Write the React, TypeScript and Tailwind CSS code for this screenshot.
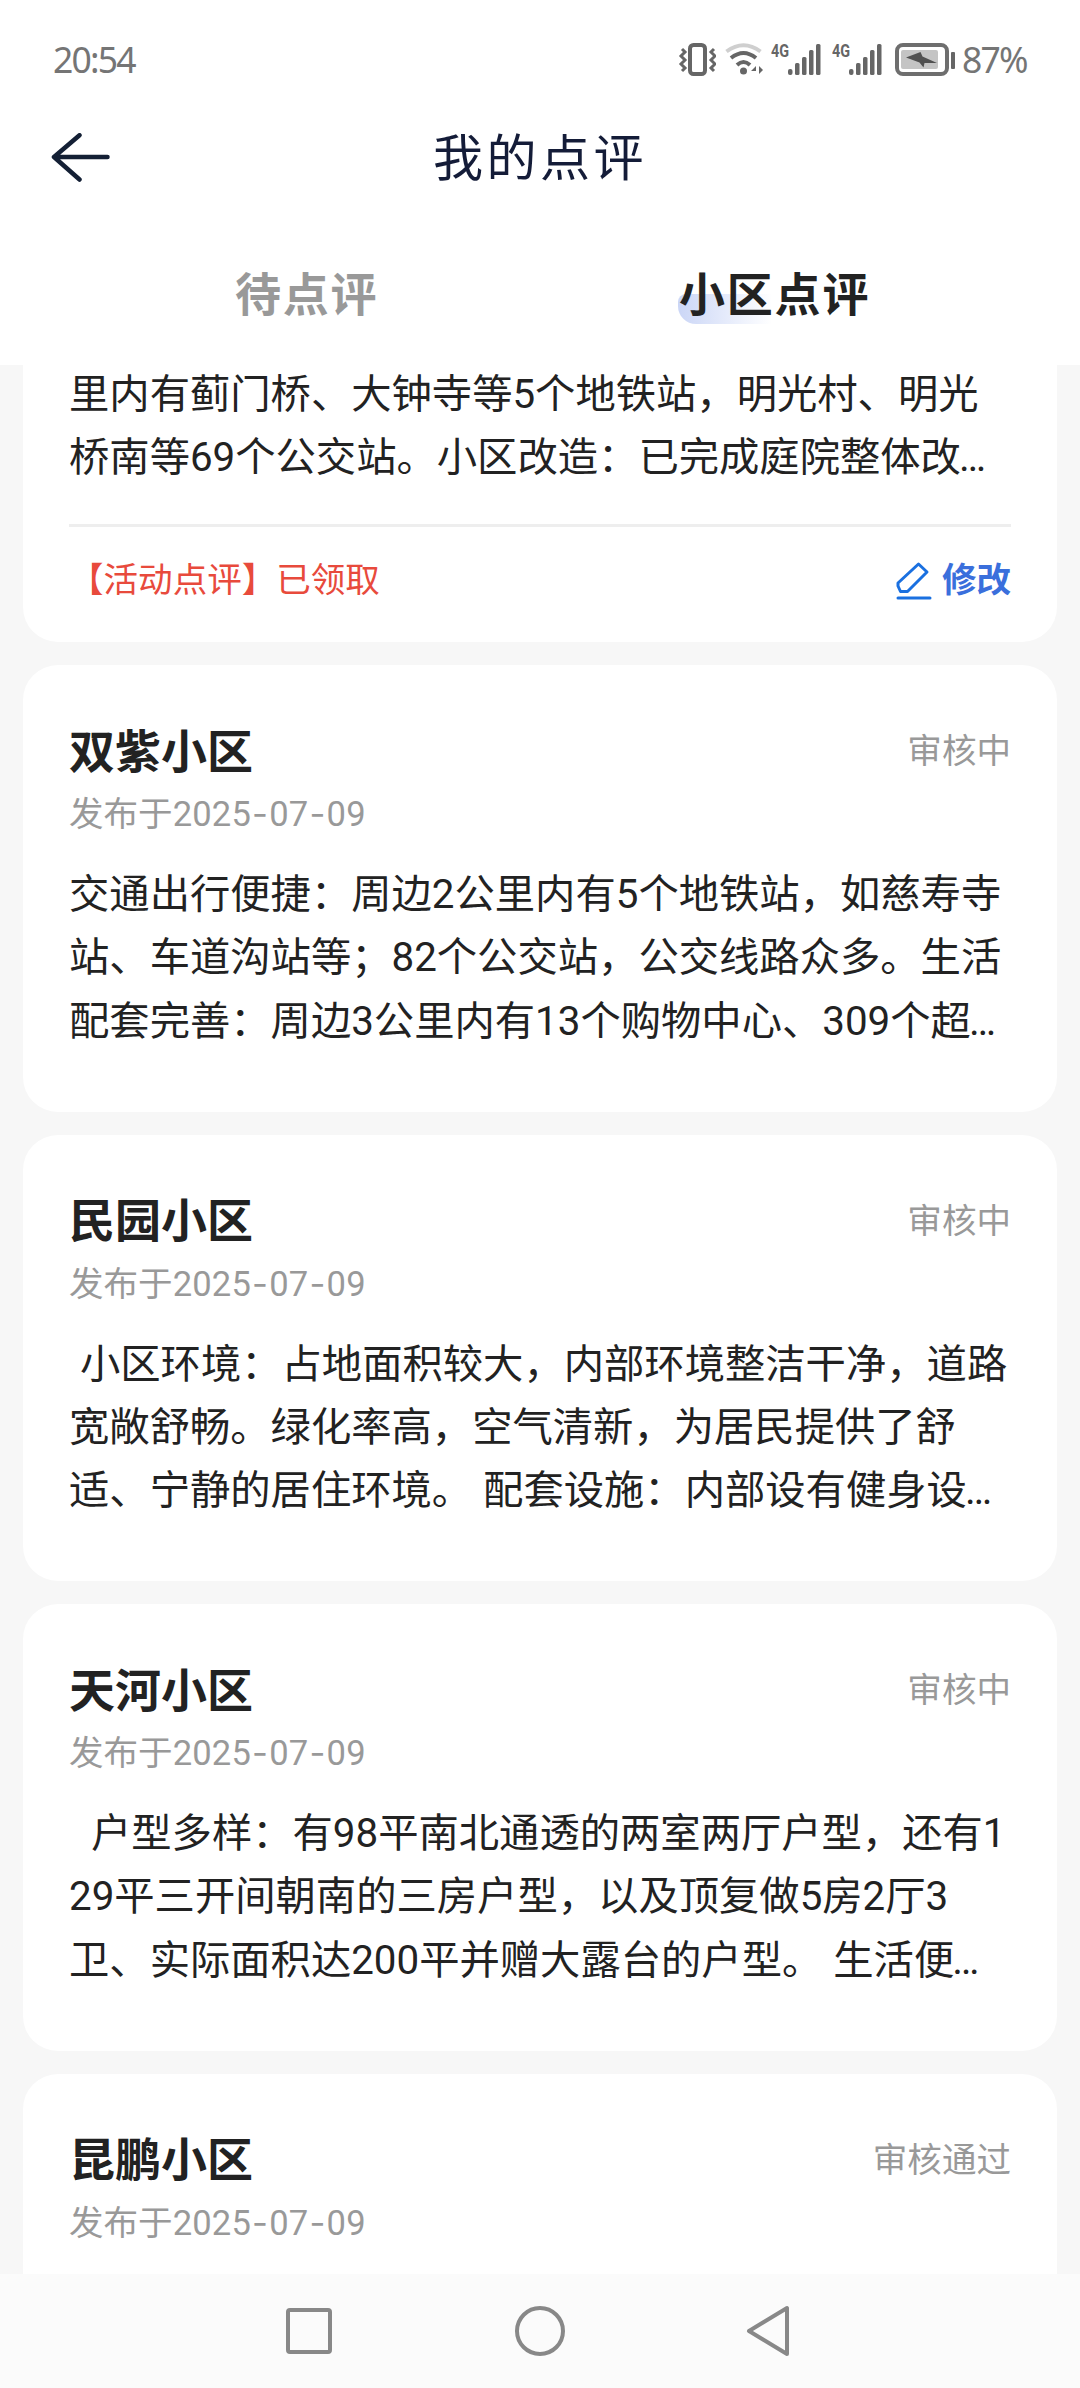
import type { ReactNode } from 'react'

interface Review {
  id: number
  name: string
  status: string
  date: string
  lines: string[]
}

const reviews: Review[] = [
  {
    id: 1,
    name: '双紫小区',
    status: '审核中',
    date: '2025-07-09',
    lines: [
      '交通出行便捷：周边2公里内有5个地铁站，如慈寿寺',
      '站、车道沟站等；82个公交站，公交线路众多。生活',
      '配套完善：周边3公里内有13个购物中心、309个超…',
    ],
  },
  {
    id: 2,
    name: '民园小区',
    status: '审核中',
    date: '2025-07-09',
    lines: [
      ' 小区环境：占地面积较大，内部环境整洁干净，道路',
      '宽敞舒畅。绿化率高，空气清新，为居民提供了舒',
      '适、宁静的居住环境。 配套设施：内部设有健身设…',
    ],
  },
  {
    id: 3,
    name: '天河小区',
    status: '审核中',
    date: '2025-07-09',
    lines: [
      '  户型多样：有98平南北通透的两室两厅户型，还有1',
      '29平三开间朝南的三房户型，以及顶复做5房2厅3',
      '卫、实际面积达200平并赠大露台的户型。 生活便…',
    ],
  },
  {
    id: 4,
    name: '昆鹏小区',
    status: '审核通过',
    date: '2025-07-09',
    lines: [],
  },
]

function Signal() {
  return (
    <div className="relative h-[34px] w-[51px]">
      <span className="absolute left-0 top-0 origin-left scale-x-[0.8] font-['Roboto'] text-[18px] font-bold leading-[15px]">4G</span>
      <svg className="absolute left-0 top-0" width="51" height="34" viewBox="0 0 51 34" fill="#666">
        <rect x="17" y="26" width="4.5" height="6" rx="2" />
        <rect x="24" y="20" width="4.5" height="12" rx="1.5" />
        <rect x="31" y="14" width="4.5" height="18" rx="1.5" />
        <rect x="38" y="7" width="4.5" height="25" rx="1.5" />
        <rect x="45" y="1" width="4.5" height="31" rx="1.5" />
      </svg>
    </div>
  )
}

function StatusBar() {
  return (
    <div className="flex h-[119px] items-center pl-[53px] text-[#666]">
      <span className="w-[625px] font-['Noto_Sans'] text-[35.500px] font-normal tracking-[-1.800px] text-[#757575]">20:54</span>
      <svg width="38" height="36" viewBox="0 0 38 36" fill="none" stroke="#666">
        <rect x="12" y="3" width="15" height="29" rx="3.5" strokeWidth="4" />
        <path d="M4 7l3 3-4 4 4 4-4 4 4 4-3 3M36 7l-3 3 4 4-4 4 4 4-4 4 3 3" strokeWidth="3" />
      </svg>
      <svg className="ml-[9px]" width="38" height="36" viewBox="0 0 38 36" fill="none" strokeWidth="4">
        <path d="M1.500 9.500Q18.500-3 35.500 9.500" stroke="#cfcfcf" />
        <path d="M6 16Q18.500 6 31 16" stroke="#666" />
        <path d="M12 23Q18.500 17 25 23" stroke="#666" />
        <circle cx="18.500" cy="29" r="3.500" fill="#666" />
        <path d="M26 29h5v-5zM34 24v8l4-4z" fill="#666" />
      </svg>
      <div className="ml-2 flex gap-[10px]">
        <Signal />
        <Signal />
      </div>
      <svg className="ml-[12px]" width="62" height="34" viewBox="0 0 62 34">
        <rect x="2" y="2" width="50" height="29" rx="6" fill="none" stroke="#6e6e6e" strokeWidth="4" />
        <rect x="6" y="7" width="37" height="19" rx="2" fill="#c4c4c4" />
        <path d="M11 14.500l14.500-5.500 2 4.500L42 20H29.500l-1 4.500-4-5z" fill="#505050" />
        <rect x="56" y="9" width="4" height="17" rx="1" fill="#666" />
      </svg>
      <span className="ml-[5px] font-['Noto_Sans'] text-[35.500px] font-normal tracking-[-1.800px] text-[#757575]">87%</span>
    </div>
  )
}

function Header() {
  return (
    <header className="flex h-[81px] items-center">
      <svg className="ml-[50px]" width="62" height="54" viewBox="0 0 62 54" fill="none" stroke="#142035" strokeWidth="4.5" strokeLinecap="round" strokeLinejoin="round">
        <path d="M57.500 24H4M29.500 2.250L4 24l25.500 22.500" />
      </svg>
      <h1 className="ml-[321px] text-[50px] tracking-[3.500px] text-[#141c38]">我的点评</h1>
    </header>
  )
}

function Tabs() {
  return (
    <div className="flex h-[165px] pt-[58px] text-[46px] font-bold leading-[74px] tracking-[1.800px]">
      <div className="ml-[235px] w-[444px] text-[#999]">待点评</div>
      <div className="relative text-[#222]">
        <div className="absolute -left-px top-[36px] h-[30px] w-[94px] rounded-bl-[18px] rounded-tl-[8px] bg-gradient-to-r from-[#cbd6f6] to-white" />
        <span className="relative">小区点评</span>
      </div>
    </div>
  )
}

function Card({ children }: { children: ReactNode }) {
  return <section className="h-[446.500px] shrink-0 rounded-[35px] bg-white px-[46px] pt-[56px]">{children}</section>
}

function Line({ text }: { text: string }) {
  const cut = text.endsWith('…')
  return (
    <p className="h-[63.360px] whitespace-pre text-[40.320px] leading-[63.360px] text-[#222] [word-spacing:1px]">
      {cut ? text.slice(0, -1) : text}
      {cut && <span className="-ml-[2px] tracking-[-3px]">…</span>}
    </p>
  )
}

function ReviewCard({ review }: { review: Review }) {
  return (
    <Card>
      <div className="flex h-[62px] items-center justify-between">
        <h2 className="text-[46px] font-bold text-[#222]">{review.name}</h2>
        <span className="text-[34.560px] text-[#999]">{review.status}</span>
      </div>
      <p className="mt-[8px] h-[46px] text-[34.560px] leading-[46px] text-[#999]">
        发布于
        {review.date.split('-').map((part, i) => (
          <span key={i} className="tracking-[0.200px]">
            {i > 0 && <span className="mx-[1px] font-['Inter']">-</span>}
            {part}
          </span>
        ))}
      </p>
      <div className="mt-[26px]">
        {review.lines.map(line => (
          <Line key={line} text={line} />
        ))}
      </div>
    </Card>
  )
}

function NavBar() {
  return (
    <nav className="flex h-[114px] items-center bg-[#fbfbfb] pl-[284px]">
      <svg width="50" height="54" viewBox="0 0 50 54" fill="none" stroke="#888" strokeWidth="4">
        <rect x="4" y="6" width="42" height="42" rx="2" />
      </svg>
      <svg className="ml-[179px]" width="54" height="54" viewBox="0 0 54 54" fill="none" stroke="#888" strokeWidth="4">
        <circle cx="27" cy="27" r="23" />
      </svg>
      <svg className="ml-[176px]" width="50" height="54" viewBox="0 0 50 54" fill="none" stroke="#888" strokeWidth="4" strokeLinejoin="round">
        <path d="M44 4v46L6 27z" />
      </svg>
    </nav>
  )
}

export default function App() {
  return (
    <div className="flex h-[2388px] w-[1080px] flex-col overflow-hidden bg-white font-['Roboto','Noto_Sans_CJK_SC',sans-serif]">
      <StatusBar />
      <Header />
      <Tabs />

      <main className="flex flex-1 flex-col gap-[23px] overflow-hidden bg-[#f7f7f7] px-[23px]">
        {/* first card is scrolled under the tabs */}
        <section className="h-[277px] shrink-0 rounded-b-[35px] bg-white px-[46px]">
          <div className="-mt-[2px]">
            <Line text="里内有蓟门桥、大钟寺等5个地铁站，明光村、明光" />
            <Line text="桥南等69个公交站。小区改造：已完成庭院整体改…" />
          </div>
          <div className="mt-[34px] flex h-[111px] items-center justify-between border-t-[3px] border-[#eee] text-[34.560px]">
            <span className="text-[#e84a3c]">【活动点评】已领取</span>
            <div className="flex items-center font-bold text-[#3a6fdc]">
              <svg className="mr-[10px]" width="36" height="40" viewBox="0 0 36 40" fill="none" stroke="#1a70e0" strokeWidth="3" strokeLinecap="round" strokeLinejoin="round">
                <path d="M22.500 3l8.500 8L11.500 30.500H4.500L2 25v-3z" />
                <path d="M2 37h32" />
              </svg>
              修改
            </div>
          </div>
        </section>

        {reviews.map(review => (
          <ReviewCard key={review.id} review={review} />
        ))}
      </main>

      <NavBar />
    </div>
  )
}
